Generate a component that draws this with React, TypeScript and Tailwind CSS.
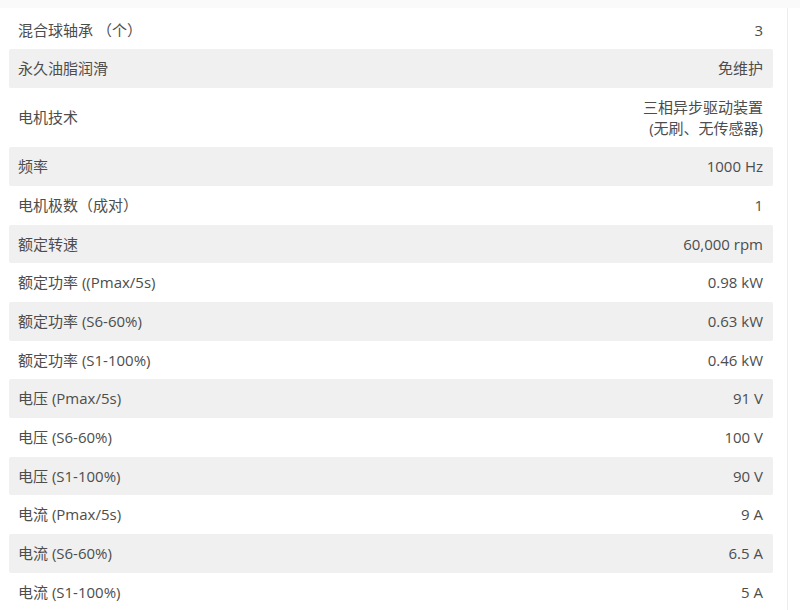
const rows: { label: string; value: string[] }[] = [
  { label: "混合球轴承 （个）", value: ["3"] },
  { label: "永久油脂润滑", value: ["免维护"] },
  { label: "电机技术", value: ["三相异步驱动装置", "(无刷、无传感器)"] },
  { label: "频率", value: ["1000 Hz"] },
  { label: "电机极数（成对）", value: ["1"] },
  { label: "额定转速", value: ["60,000 rpm"] },
  { label: "额定功率 ((Pmax/5s)", value: ["0.98 kW"] },
  { label: "额定功率 (S6-60%)", value: ["0.63 kW"] },
  { label: "额定功率 (S1-100%)", value: ["0.46 kW"] },
  { label: "电压 (Pmax/5s)", value: ["91 V"] },
  { label: "电压 (S6-60%)", value: ["100 V"] },
  { label: "电压 (S1-100%)", value: ["90 V"] },
  { label: "电流 (Pmax/5s)", value: ["9 A"] },
  { label: "电流 (S6-60%)", value: ["6.5 A"] },
  { label: "电流 (S1-100%)", value: ["5 A"] },
];

export default function App() {
  return (
    <div
      className="h-[610px] w-[800px] overflow-hidden bg-white text-[15px] text-[#4d4d4d]"
      style={{ fontFamily: '"Open Sans", "Noto Sans CJK SC", sans-serif' }}
    >
      <div className="h-[8px] bg-[#fafafa]" />
      <div className="flex">
        <div className="w-[788px] border-r border-[#ededed] pl-[9px] pr-[14px] pt-[2.67px]">
          {rows.map((r, i) => (
            <div
              key={i}
              className={
                "flex items-center justify-between rounded-[2px] py-[9px] pl-[9px] pr-[10px] leading-[20.67px] " +
                (i % 2 === 1 ? "bg-[#f0f0f0]" : "bg-white")
              }
            >
              <span>{r.label}</span>
              <span className="text-right">
                {r.value.map((v, j) => (
                  <div key={j}>{v}</div>
                ))}
              </span>
            </div>
          ))}
        </div>
      </div>
    </div>
  );
}
